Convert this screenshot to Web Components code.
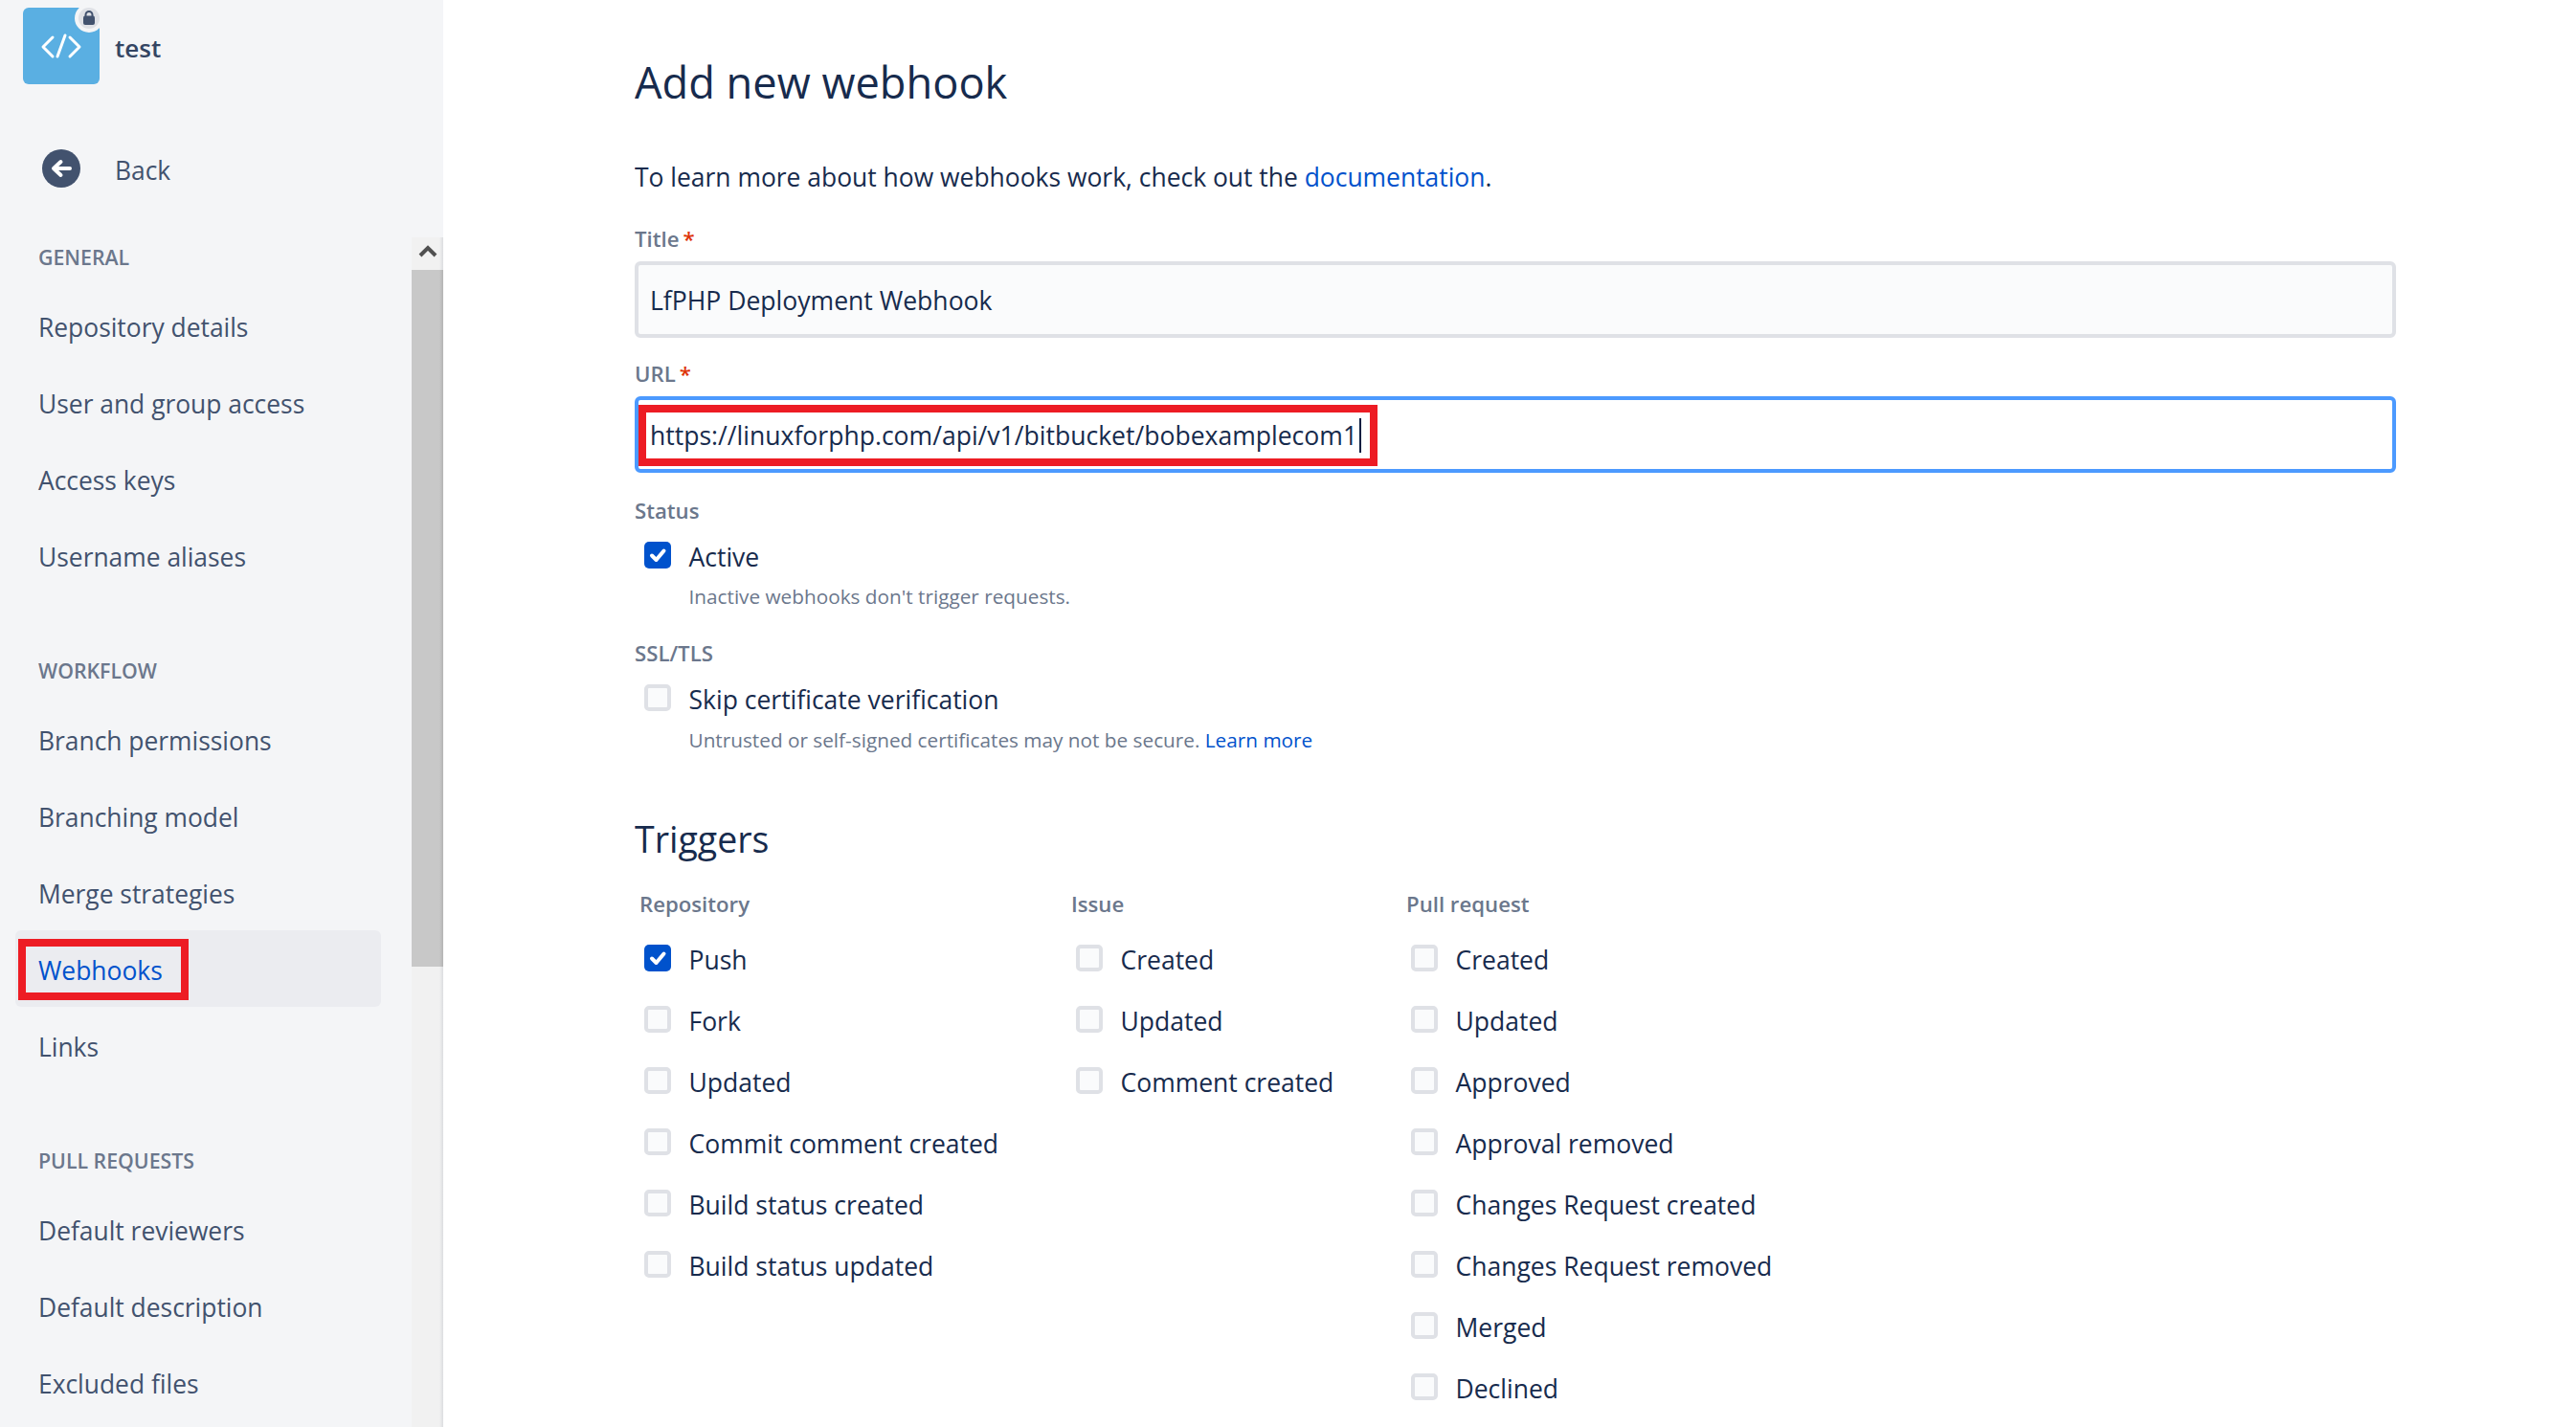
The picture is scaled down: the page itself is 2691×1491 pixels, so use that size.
<!DOCTYPE html>
<html lang="en">
<head>
<meta charset="utf-8">
<title>Add new webhook</title>
<style>
  html, body { margin: 0; height: 100%; overflow: hidden; background: #fff; }
  body {
    display: flex;
    font-family: "Open Sans", "Noto Sans", sans-serif;
    color: #172b4d;
  }
</style>
</head>
<body>

<repo-sidebar>
  <nav-section title="GENERAL">
    <nav-item>Repository details</nav-item>
    <nav-item>User and group access</nav-item>
    <nav-item>Access keys</nav-item>
    <nav-item>Username aliases</nav-item>
  </nav-section>
  <nav-section title="WORKFLOW">
    <nav-item>Branch permissions</nav-item>
    <nav-item>Branching model</nav-item>
    <nav-item>Merge strategies</nav-item>
    <nav-item selected>Webhooks</nav-item>
    <nav-item>Links</nav-item>
  </nav-section>
  <nav-section title="PULL REQUESTS">
    <nav-item>Default reviewers</nav-item>
    <nav-item>Default description</nav-item>
    <nav-item>Excluded files</nav-item>
  </nav-section>
</repo-sidebar>

<webhook-form></webhook-form>

<script>
class RepoSidebar extends HTMLElement {
    constructor() {
        super();
        const shadowRoot = this.attachShadow({mode: 'open'});
        shadowRoot.innerHTML = `
            <style>
                :host {
                    display: flex;
                    flex-direction: column;
                    flex: none;
                    width: 463px;
                    height: 1491px;
                    overflow: hidden;
                    background: #f4f5f7;
                }
                .repo {
                    display: flex;
                    align-items: center;
                    gap: 16px;
                    height: 80px;
                    margin: 8px 0 0 24px;
                    font-size: 26px;
                    font-weight: 600;
                    color: #344563;
                }
                .repo > span { padding-top: 3px; }
                .logo {
                    position: relative;
                    width: 80px;
                    height: 80px;
                    border-radius: 6px;
                    background: #5aafe2;
                }
                .logo > svg { display: block; }
                .lock {
                    position: absolute;
                    top: -5px;
                    right: -5px;
                }
                .back {
                    display: flex;
                    align-items: center;
                    gap: 36px;
                    height: 40px;
                    margin: 68px 0 0 44px;
                    font-size: 26.4px;
                    color: #42526e;
                }
                .back span { position: relative; top: 2px; }
                .scroller {
                    display: flex;
                    flex: 1;
                    min-height: 0;
                    margin-top: 52px;
                }
                .items { flex: 1; min-width: 0; }
                .bar {
                    flex: none;
                    width: 33px;
                    display: flex;
                    flex-direction: column;
                    background: linear-gradient(to right, #f1f1f1 0, #f1f1f1 29px, #dcdde0 33px);
                }
                .arrow { flex: none; height: 34px; }
                .arrow svg { display: block; }
                .thumb {
                    flex: none;
                    height: 728px;
                    background: linear-gradient(to right, #c8c8c8 0, #c8c8c8 29px, #b4b4b4 33px);
                }
                .track { flex: none; height: 472px; }
            </style>
            <div class="repo">
                <div class="logo">
                    <svg width="80" height="80" viewBox="0 0 80 80" fill="none" stroke="#fff" stroke-width="3" stroke-linecap="round" stroke-linejoin="round">
                        <path d="M31 31 L21 41 L31 51"/>
                        <path d="M49 31 L59 41 L49 51"/>
                        <path d="M44 29 L36 51"/>
                    </svg>
                    <svg class="lock" width="32" height="32" viewBox="0 0 32 32">
                        <circle cx="16" cy="16" r="15" fill="#f4f5f7"/>
                        <circle cx="16" cy="16" r="11" fill="#dfe1e6"/>
                        <rect x="10" y="13.5" width="12" height="9.5" rx="2" fill="#42526e"/>
                        <path d="M12.5 15 V12.5 a3.5 3.5 0 0 1 7 0 V15" fill="none" stroke="#42526e" stroke-width="2"/>
                    </svg>
                </div>
                <span>test</span>
            </div>
            <div class="back">
                <svg width="40" height="40" viewBox="0 0 40 40">
                    <circle cx="20" cy="20" r="20" fill="#42526e"/>
                    <path d="M29 20 H13 M19.5 13 L12 20 L19.5 27" fill="none" stroke="#fff" stroke-width="4" stroke-linecap="round" stroke-linejoin="round"/>
                </svg>
                <span>Back</span>
            </div>
            <div class="scroller">
                <div class="items"><slot></slot></div>
                <div class="bar">
                    <div class="arrow">
                        <svg width="33" height="34" viewBox="0 0 33 34"><path d="M9 19 L17 11 L25 19" fill="none" stroke="#505050" stroke-width="4"/></svg>
                    </div>
                    <div class="thumb"></div>
                    <div class="track"></div>
                    <div class="arrow">
                        <svg width="33" height="34" viewBox="0 0 33 34"><path d="M9 12 L17 20 L25 12" fill="none" stroke="#505050" stroke-width="4"/></svg>
                    </div>
                </div>
            </div>
        `;
    }
}

class NavSection extends HTMLElement {
    constructor() {
        super();
        const shadowRoot = this.attachShadow({mode: 'open'});
        shadowRoot.innerHTML = `
            <style>
                :host { display: block; margin-bottom: 60px; }
                h3 {
                    margin: 0 0 10px 40px;
                    height: 42px;
                    line-height: 42px;
                    font-size: 21.3px;
                    font-weight: 600;
                    color: #6b778c;
                }
            </style>
            <h3></h3>
            <slot></slot>
        `;
    }

    connectedCallback() {
        this.shadowRoot.querySelector('h3').textContent = this.getAttribute('title');
    }
}

class NavItem extends HTMLElement {
    constructor() {
        super();
        const shadowRoot = this.attachShadow({mode: 'open'});
        shadowRoot.innerHTML = `
            <style>
                :host {
                    position: relative;
                    display: flex;
                    align-items: center;
                    box-sizing: border-box;
                    width: 382px;
                    height: 80px;
                    margin-left: 16px;
                    padding: 3px 0 0 24px;
                    border-radius: 6px;
                    font-size: 26.4px;
                    color: #42526e;
                }
                :host([selected]) { background: #ebecf0; color: #0052cc; }
                .mark {
                    display: none;
                    position: absolute;
                    left: 3px;
                    top: 9px;
                    width: 178px;
                    height: 64px;
                    box-sizing: border-box;
                    border: 8px solid #ed1c24;
                }
                :host([selected]) .mark { display: block; }
            </style>
            <slot></slot>
            <div class="mark"></div>
        `;
    }
}

class FormField extends HTMLElement {
    constructor() {
        super();
        const shadowRoot = this.attachShadow({mode: 'open'});
        shadowRoot.innerHTML = `
            <style>
                :host { display: block; }
                label {
                    display: block;
                    height: 32px;
                    line-height: 32px;
                    font-size: 22.2px;
                    font-weight: 600;
                    color: #6b778c;
                }
                .req { color: #de350b; margin-left: 4px; display: none; }
                :host([required]) .req { display: inline; }
            </style>
            <label><span class="text"></span><span class="req">*</span></label>
            <slot></slot>
        `;
    }

    connectedCallback() {
        this.shadowRoot.querySelector('.text').textContent = this.getAttribute('label');
    }
}

class TextBox extends HTMLElement {
    constructor() {
        super();
        const shadowRoot = this.attachShadow({mode: 'open'});
        shadowRoot.innerHTML = `
            <style>
                :host {
                    position: relative;
                    display: flex;
                    align-items: center;
                    box-sizing: border-box;
                    height: 80px;
                    margin-top: 7px;
                    padding: 2px 0 0 12px;
                    border: 4px solid #dfe1e6;
                    border-radius: 6px;
                    background: #fafbfc;
                    font-size: 26.55px;
                    color: #172b4d;
                }
                :host([focused]) { border-color: #4c9aff; background: #fff; }
                .caret {
                    display: none;
                    width: 2px;
                    height: 36px;
                    margin-left: 2px;
                    background: #091e42;
                }
                :host([focused]) .caret { display: block; }
                .mark {
                    display: none;
                    position: absolute;
                    left: 0;
                    top: 5px;
                    width: 772px;
                    height: 64px;
                    box-sizing: border-box;
                    border: 8px solid #ed1c24;
                }
                :host([focused]) .mark { display: block; }
            </style>
            <slot></slot>
            <div class="caret"></div>
            <div class="mark"></div>
        `;
    }
}

class CheckRow extends HTMLElement {
    constructor() {
        super();
        const shadowRoot = this.attachShadow({mode: 'open'});
        shadowRoot.innerHTML = `
            <style>
                :host {
                    display: grid;
                    grid-template-columns: 28px 1fr;
                    column-gap: 18.5px;
                    align-items: center;
                    margin-left: 10px;
                    font-size: 26.5px;
                    color: #172b4d;
                }
                .box {
                    box-sizing: border-box;
                    width: 28px;
                    height: 28px;
                    border: 4px solid #dfe1e6;
                    border-radius: 5px;
                    background: #fafbfc;
                }
                .box svg { display: none; }
                :host([checked]) .box { border: 0; background: #0052cc; }
                :host([checked]) .box svg { display: block; }
                .text { height: 40px; line-height: 40px; white-space: nowrap; position: relative; top: 2px; }
                .help { grid-column: 2; }
            </style>
            <div class="box">
                <svg width="28" height="28" viewBox="0 0 28 28">
                    <path d="M8 14.5 L12.5 19 L20.5 9.5" fill="none" stroke="#fff" stroke-width="4" stroke-linecap="round" stroke-linejoin="round"/>
                </svg>
            </div>
            <div class="text"><slot></slot></div>
            <div class="help"><slot name="help"></slot></div>
        `;
    }
}

class TriggerColumn extends HTMLElement {
    constructor() {
        super();
        const shadowRoot = this.attachShadow({mode: 'open'});
        shadowRoot.innerHTML = `
            <style>
                :host { display: flex; flex-direction: column; row-gap: 24px; }
                h4 {
                    margin: 0 0 -4px 5px;
                    height: 32px;
                    line-height: 32px;
                    font-size: 22.2px;
                    font-weight: 600;
                    color: #6b778c;
                }
            </style>
            <h4></h4>
            <slot></slot>
        `;
    }

    connectedCallback() {
        this.shadowRoot.querySelector('h4').textContent = this.getAttribute('title');
        const names = this.getAttribute('items').split('|');
        names.forEach((name, i) => {
            const row = document.createElement('check-row');
            row.textContent = name;
            if (this.hasAttribute('first-checked') && i === 0) row.setAttribute('checked', '');
            this.appendChild(row);
        });
    }
}

class WebhookForm extends HTMLElement {
    constructor() {
        super();
        const shadowRoot = this.attachShadow({mode: 'open'});
        shadowRoot.innerHTML = `
            <style>
                :host {
                    display: block;
                    flex: none;
                    box-sizing: border-box;
                    width: 1840px;
                    height: 1491px;
                    margin-left: 200px;
                    padding-top: 54px;
                    overflow: hidden;
                }
                h1 {
                    margin: 0;
                    height: 64px;
                    line-height: 64px;
                    font-size: 45.2px;
                    font-weight: 400;
                    color: #172b4d;
                }
                p {
                    margin: 47px 0 29px;
                    height: 40px;
                    line-height: 40px;
                    font-size: 26.45px;
                    color: #172b4d;
                }
                a { color: #0052cc; text-decoration: none; }
                form-field.url { margin-top: 22px; }
                form-field.status { margin-top: 24px; }
                form-field.ssl { margin-top: 28px; }
                form-field check-row { margin-top: 10px; }
                .help {
                    display: block;
                    margin-top: 8px;
                    height: 32px;
                    line-height: 32px;
                    font-size: 20.75px;
                    color: #6b778c;
                    white-space: nowrap;
                }
                .status .help { margin-top: 7px; }
                h2 {
                    margin: 60px 0 24px;
                    height: 56px;
                    line-height: 56px;
                    font-size: 37.5px;
                    font-weight: 500;
                    color: #172b4d;
                }
                .triggers {
                    display: grid;
                    grid-template-columns: 451px 350px 1fr;
                    align-items: start;
                }
            </style>
            <h1>Add new webhook</h1>
            <p>To learn more about how webhooks work, check out the <a>documentation</a>.</p>
            <form-field label="Title" required>
                <text-box>LfPHP Deployment Webhook</text-box>
            </form-field>
            <form-field class="url" label="URL" required>
                <text-box focused>https://linuxforphp.com/api/v1/bitbucket/bobexamplecom1</text-box>
            </form-field>
            <form-field class="status" label="Status">
                <check-row checked>Active<span class="help" slot="help">Inactive webhooks don't trigger requests.</span></check-row>
            </form-field>
            <form-field class="ssl" label="SSL/TLS">
                <check-row>Skip certificate verification<span class="help" slot="help">Untrusted or self-signed certificates may not be secure. <a>Learn more</a></span></check-row>
            </form-field>
            <h2>Triggers</h2>
            <div class="triggers">
                <trigger-column title="Repository" first-checked items="Push|Fork|Updated|Commit comment created|Build status created|Build status updated"></trigger-column>
                <trigger-column title="Issue" items="Created|Updated|Comment created"></trigger-column>
                <trigger-column title="Pull request" items="Created|Updated|Approved|Approval removed|Changes Request created|Changes Request removed|Merged|Declined"></trigger-column>
            </div>
        `;
    }
}

window.customElements.define('repo-sidebar', RepoSidebar);
window.customElements.define('nav-section', NavSection);
window.customElements.define('nav-item', NavItem);
window.customElements.define('form-field', FormField);
window.customElements.define('text-box', TextBox);
window.customElements.define('check-row', CheckRow);
window.customElements.define('trigger-column', TriggerColumn);
window.customElements.define('webhook-form', WebhookForm);
</script>
</body>
</html>
